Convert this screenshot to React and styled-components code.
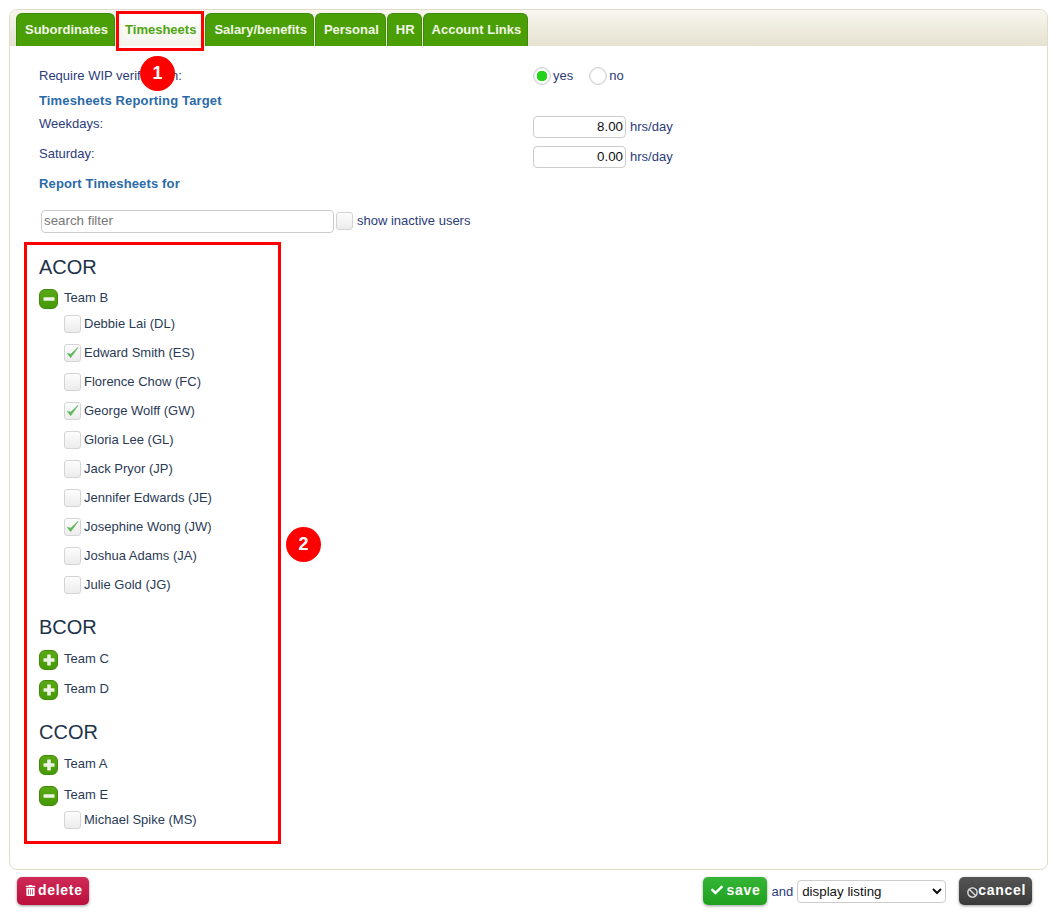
import React from "react";
import styled, { createGlobalStyle } from "styled-components";
import { FaCheck, FaTrashAlt, FaBan } from "react-icons/fa";

const GlobalStyle = createGlobalStyle`
  html, body {
    margin: 0;
    background: #fff;
    font-family: "Liberation Sans", Arial, sans-serif;
    font-size: 13px;
    color: #2b3c7a;
  }
  * { box-sizing: border-box; }
`;

const tabs = ["Subordinates", "Timesheets", "Salary/benefits", "Personal", "HR", "Account Links"];

const groups = [
  {
    name: "ACOR",
    gap: 0,
    after: 13,
    teams: [
      {
        name: "Team B",
        open: true,
        people: [
          ["Debbie Lai (DL)", false],
          ["Edward Smith (ES)", true],
          ["Florence Chow (FC)", false],
          ["George Wolff (GW)", true],
          ["Gloria Lee (GL)", false],
          ["Jack Pryor (JP)", false],
          ["Jennifer Edwards (JE)", false],
          ["Josephine Wong (JW)", true],
          ["Joshua Adams (JA)", false],
          ["Julie Gold (JG)", false],
        ],
      },
    ],
  },
  { name: "BCOR", gap: 1, after: 14, teams: [{ name: "Team C" }, { name: "Team D" }] },
  {
    name: "CCOR",
    gap: 1,
    after: 0,
    teams: [
      { name: "Team A", height: 31 },
      { name: "Team E", height: 29, open: true, people: [["Michael Spike (MS)", false]] },
    ],
  },
];

function App() {
  return (
    <Page>
      <GlobalStyle />
      <Panel>
        <TabBar>
          {tabs.map((t) => (
            <Tab key={t} $active={t === "Timesheets"}>{t}</Tab>
          ))}
        </TabBar>
        <Content>
          <FormRow $height={25} $center>
            <Label $flush>Require WIP verification:</Label>
            <Radios>
              <Radio $on />
              <span>yes</span>
              <Radio />
              <span>no</span>
            </Radios>
          </FormRow>
          <Heading $height={24}>Timesheets Reporting Target</Heading>
          <FormRow $height={30}>
            <Label>Weekdays:</Label>
            <Controls>
              <NumberBox>8.00</NumberBox>
              <span>hrs/day</span>
            </Controls>
          </FormRow>
          <FormRow $height={30}>
            <Label>Saturday:</Label>
            <Controls>
              <NumberBox>0.00</NumberBox>
              <span>hrs/day</span>
            </Controls>
          </FormRow>
          <Heading $height={22}>Report Timesheets for</Heading>
          <Filter>
            <SearchBox>search filter</SearchBox>
            <Check />
            <span>show inactive users</span>
          </Filter>
          <Tree>
            {groups.map((g) => (
              <Group key={g.name} $after={g.after}>
                <GroupName $gap={g.gap}>{g.name}</GroupName>
                {g.teams.map((team) => (
                  <div key={team.name}>
                    <TeamRow $height={team.height || 30}>
                      <Toggle>
                        <Glyph viewBox="0 0 12 12">
                          <rect x="0.5" y="4.2" width="11" height="3.6" rx="0.6" fill="#eef3e6" />
                          {!team.open && <rect x="4.2" y="0.5" width="3.6" height="11" rx="0.6" fill="#eef3e6" />}
                        </Glyph>
                      </Toggle>
                      <TeamName>{team.name}</TeamName>
                    </TeamRow>
                    {team.open && (
                      <People>
                        {team.people.map(([name, checked]) => (
                          <Person key={name}>
                            <Check>
                              {checked && (
                                <svg width="13" height="13" viewBox="0 0 14 14">
                                  <path d="M1.5 8 L5 12.5 L13 1.5 L5.2 8.8 Z" fill="#5cb85c" stroke="#5cb85c" strokeWidth="0.8" />
                                </svg>
                              )}
                            </Check>
                            <span>{name}</span>
                          </Person>
                        ))}
                      </People>
                    )}
                  </div>
                ))}
              </Group>
            ))}
          </Tree>
        </Content>
      </Panel>
      <Footer>
        <Button $tone="delete" $gap={2}><FaTrashAlt size={11} />delete</Button>
        <FooterRight>
          <Button $tone="save" $gap={4}><FaCheck size={12} />save</Button>
          <span>and</span>
          <Select defaultValue="display listing">
            <option>display listing</option>
          </Select>
          <Button $tone="cancel" $gap={0}><BanIcon size={11} />cancel</Button>
        </FooterRight>
      </Footer>
      <RedBox $x={116} $y={11} $w={88} $h={40} />
      <RedBox $x={24} $y={242} $w={257} $h={602} />
      <Marker $x={140} $y={56}>1</Marker>
      <Marker $x={286} $y={527}>2</Marker>
    </Page>
  );
}

export default App;

const Page = styled.div`
  position: relative;
  width: 1052px;
  height: 913px;
  padding: 9px 4px 0 9px;
  overflow: hidden;
`;

const Panel = styled.div`
  height: 861px;
  border: 1px solid #dfdccb;
  border-radius: 8px;
`;

const TabBar = styled.div`
  display: flex;
  align-items: flex-end;
  gap: 1px;
  height: 36px;
  padding-left: 6px;
  border-radius: 7px 7px 0 0;
  background: linear-gradient(#f8f6ef, #e6e2d0);
`;

const Tab = styled.div`
  display: flex;
  align-items: center;
  height: 33px;
  padding: 0 ${(p) => (p.$active ? 7 : 6)}px 2px 8px;
  border-radius: 6px 6px 0 0;
  font-size: 13px;
  font-weight: bold;
  background: ${(p) => (p.$active ? "linear-gradient(#fff, #f4f4ec)" : "#4a9f06")};
  color: ${(p) => (p.$active ? "#4ea510" : "#f2f7e6")};
  border: 1px solid ${(p) => (p.$active ? "#fff" : "#3f8a08")};
  border-bottom: 0;
`;

const Content = styled.div`
  padding: 17px 0 0 29px;
`;

const FormRow = styled.div`
  display: grid;
  grid-template-columns: 494px 1fr;
  align-items: ${(p) => (p.$center ? "center" : "start")};
  height: ${(p) => p.$height}px;
`;

const Label = styled.div`
  line-height: 16px;
  margin-top: ${(p) => (p.$flush ? 0 : 4)}px;
`;

const Radios = styled.div`
  display: flex;
  align-items: center;
  gap: 2px;

  span:nth-child(2) { margin-right: 14px; }
`;

const Radio = styled.span`
  width: 18px;
  height: 18px;
  border: 1px solid #d0d0d0;
  border-radius: 50%;
  background: ${(p) => (p.$on ? "radial-gradient(circle, #22d41c 0 5px, #fff 5.5px)" : "#fff")};
  box-shadow: inset 0 0 0 1px #eee;
`;

const Heading = styled.div`
  display: flex;
  align-items: center;
  height: ${(p) => p.$height}px;
  font-weight: bold;
  letter-spacing: 0.15px;
  color: #2a6aa8;
`;

const Controls = styled.div`
  display: flex;
  align-items: center;
  gap: 4px;
  margin-top: 4px;

  span { margin-top: -1px; }
`;

const NumberBox = styled.div`
  width: 93px;
  height: 22px;
  padding-right: 2px;
  border: 1px solid #ccc;
  border-radius: 4px;
  font-size: 13.33px;
  line-height: 19px;
  text-align: right;
  color: #111;
`;

const Filter = styled.div`
  display: flex;
  align-items: center;
  gap: 2px;
  height: 24px;
  margin: 15px 0 0 2px;

  > span:last-child { margin: -1px 0 0 2px; }
`;

const SearchBox = styled.div`
  width: 293px;
  height: 23px;
  padding-left: 2px;
  border: 1px solid #ccc;
  border-radius: 4px;
  font-size: 13.33px;
  line-height: 20px;
  color: #777;
`;

const Check = styled.span`
  display: flex;
  align-items: center;
  justify-content: center;
  flex: none;
  width: 17px;
  height: 18px;
  border: 1px solid #d4d4d4;
  border-radius: 3px;
  background: linear-gradient(#fdfdfd, #ececec);
`;

const Tree = styled.div`
  margin-top: 19px;
`;

const Group = styled.div`
  margin-bottom: ${(p) => p.$after}px;
`;

const GroupName = styled.div`
  height: 30px;
  margin-bottom: ${(p) => p.$gap}px;
  font-size: 20px;
  line-height: 30px;
  color: #1d3349;
`;

const TeamRow = styled.div`
  display: flex;
  align-items: flex-start;
  gap: 6px;
  height: ${(p) => p.$height}px;
  padding-top: 7px;
  color: #2a3b55;
  line-height: 16px;
`;

const TeamName = styled.span`
  margin-top: 1px;
`;

const Toggle = styled.span`
  display: flex;
  align-items: center;
  justify-content: center;
  width: 19px;
  height: 20px;
  border: 1px solid #3f8a08;
  border-radius: 6px;
  background: linear-gradient(#5aa815, #459a05);
`;

const Glyph = styled.svg`
  width: 12px;
  height: 12px;
`;

const People = styled.div`
  display: flex;
  flex-direction: column;
  margin-top: -3px;
  padding-left: 25px;
`;

const Person = styled.div`
  display: flex;
  align-items: center;
  gap: 3px;
  height: 29px;
  color: #2a3b55;
`;

const Footer = styled.div`
  display: flex;
  justify-content: space-between;
  align-items: center;
  padding: 7px 16px 0 8px;
`;

const FooterRight = styled.div`
  display: flex;
  align-items: center;
  gap: 4px;
`;

const tones = {
  delete: "linear-gradient(#cf2a58, #bb0f3c)",
  save: "linear-gradient(#35b535, #1fa01f)",
  cancel: "linear-gradient(#555, #3a3a3a)",
};

const Button = styled.div`
  display: flex;
  align-items: center;
  gap: ${(p) => p.$gap}px;
  height: 28px;
  padding: 0 6px 2px 8px;
  border-radius: 5px;
  background: ${(p) => tones[p.$tone]};
  box-shadow: 0 1px 3px rgba(0, 0, 0, 0.4);
  color: #fff;
  font-size: 14px;
  font-weight: bold;
  letter-spacing: 0.7px;
  margin-left: ${(p) => (p.$tone === "cancel" ? "9px" : "0")};
  margin-right: ${(p) => (p.$tone === "save" ? "1px" : "0")};

  svg { flex: none; }
`;

const BanIcon = styled(FaBan)`
  margin-top: 4px;
  color: #ddd;
`;

const Select = styled.select`
  width: 149px;
  height: 23px;
  border: 1px solid #ccc;
  border-radius: 4px;
  background: #fff;
  color: #111;
  font-family: "Liberation Sans", Arial, sans-serif;
  font-size: 13.33px;
`;

const RedBox = styled.div`
  position: absolute;
  left: ${(p) => p.$x}px;
  top: ${(p) => p.$y}px;
  width: ${(p) => p.$w}px;
  height: ${(p) => p.$h}px;
  border: 3px solid #f00;
`;

const Marker = styled.div`
  position: absolute;
  left: ${(p) => p.$x}px;
  top: ${(p) => p.$y}px;
  width: 35px;
  height: 35px;
  border-radius: 50%;
  background: #f00;
  color: #fff;
  font-size: 18px;
  font-weight: bold;
  line-height: 35px;
  text-align: center;
`;
